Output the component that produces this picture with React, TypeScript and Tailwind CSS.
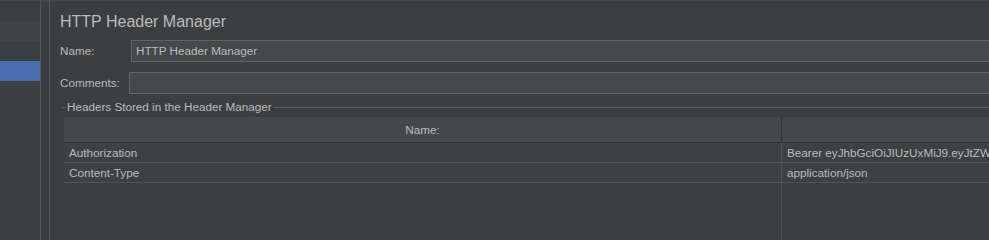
import React from 'react'

const font = { fontFamily: '"Liberation Sans", Arial, sans-serif' }

const rows = [
  { name: 'Authorization', value: 'Bearer eyJhbGciOiJIUzUxMiJ9.eyJtZWFzdXJlbWVudCI6InRlc3QifQ' },
  { name: 'Content-Type', value: 'application/json' },
]

export default function App() {
  return (
    <div
      className="flex w-[989px] h-[240px] overflow-hidden bg-[#3c3f41] text-[#bbbbbb] border-t border-[#46494b]"
      style={font}
    >
      {/* Tree panel (cut off) */}
      <div className="w-[40px] shrink-0 flex flex-col">
        <div className="h-[20px]" />
        <div className="h-[20px] bg-[#414446]" />
        <div className="h-[20px]" />
        <div className="h-[20px] bg-[#4b6eaf]" />
      </div>
      <div className="w-px shrink-0 bg-[#545759]" />
      <div className="w-[8px] shrink-0" />
      <div className="w-px shrink-0 bg-[#545759]" />

      {/* Editor */}
      <div className="flex-1 min-w-0 flex flex-col pl-[10px]">
        <div className="mt-[11px] h-[19px] leading-[19px] text-[16px] whitespace-nowrap">HTTP Header Manager</div>

        <div className="mt-[9px] flex items-center h-[22px] text-[11.7px]">
          <div className="w-[71px] shrink-0">Name:</div>
          <div className="flex-1 h-[22px] bg-[#45494a] border border-[#646464] border-r-0 flex items-center pl-[4px] whitespace-nowrap">
            HTTP Header Manager
          </div>
        </div>

        <div className="mt-[10px] flex items-center h-[22px] text-[11.7px]">
          <div className="w-[69px] shrink-0">Comments:</div>
          <div className="flex-1 h-[22px] bg-[#45494a] border border-[#646464] border-r-0" />
        </div>

        {/* Titled border */}
        <div className="mt-[6px] ml-[2px] flex items-center h-[14px] text-[11.7px]">
          <div className="w-[4px] h-px bg-[#5a5d5f]" />
          <div className="px-px whitespace-nowrap leading-[14px]">Headers Stored in the Header Manager</div>
          <div className="flex-1 h-px bg-[#5a5d5f]" />
        </div>

        {/* Table */}
        <div className="mt-[3px] ml-[4px] flex-1 flex flex-col text-[11.7px]">
          <div className="flex h-[26px] bg-[#45484a] border-b border-[#323436]">
            <div className="w-[718px] shrink-0 flex items-center justify-center border-r border-[#323436]">Name:</div>
            <div className="flex-1" />
          </div>
          {rows.map((r) => (
            <div key={r.name} className="flex h-[20px] bg-[#3e4143] border-b border-[#505355]">
              <div className="w-[718px] shrink-0 flex items-center pl-[5px] border-r border-[#505355] whitespace-nowrap">
                {r.name}
              </div>
              <div className="flex-1 min-w-0 flex items-center pl-[5px] whitespace-nowrap overflow-hidden">{r.value}</div>
            </div>
          ))}
          <div className="flex flex-1">
            <div className="w-[718px] shrink-0 border-r border-[#505355]" />
            <div className="flex-1" />
          </div>
        </div>
      </div>
    </div>
  )
}
